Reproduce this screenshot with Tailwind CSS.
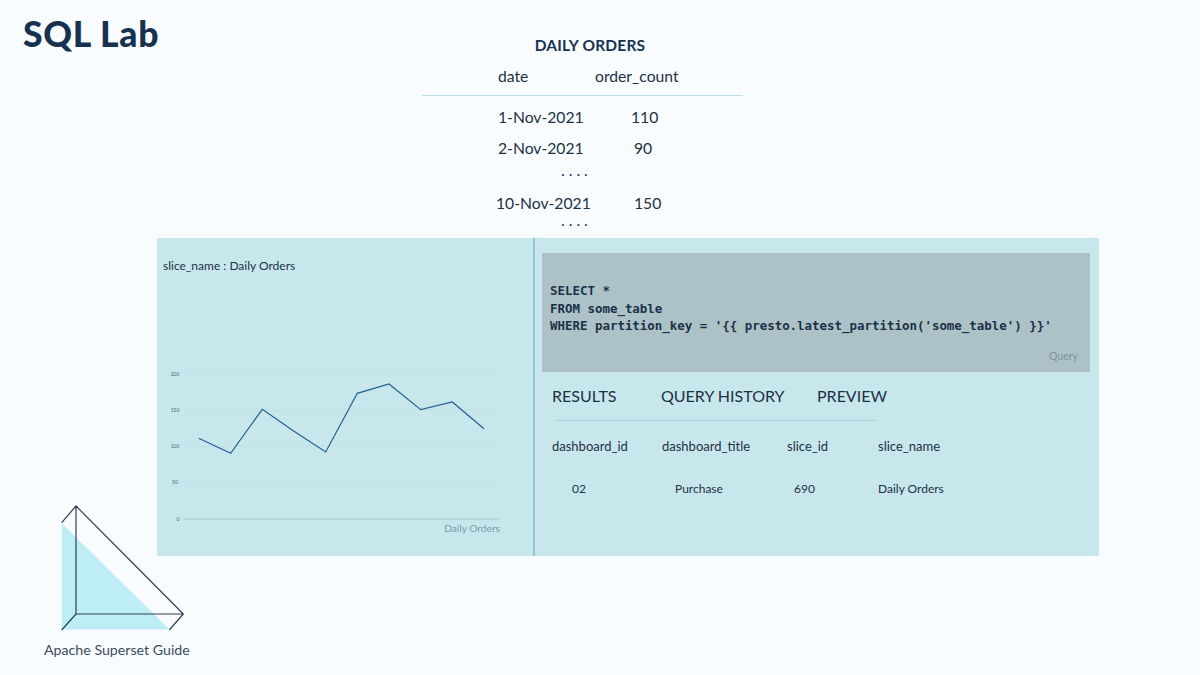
<!DOCTYPE html>
<html lang="en">
<head>
    <meta charset="UTF-8">
    <title>SQL Lab</title>
    <script src="https://cdn.jsdelivr.net/npm/@tailwindcss/browser@4"></script>
</head>
<body class="bg-[#f8fcff]">
<div class="relative w-[1200px] h-[675px] overflow-hidden font-['Lato',sans-serif] text-[#1d3044]">

    <!-- top: title + daily orders table -->
    <div class="flex h-[238px]">
        <div class="w-[422px] pl-[23px] pt-[12px]">
            <h1 class="text-[35.5px] leading-[44px] font-black text-[#16324f] tracking-[0.7px]">SQL Lab</h1>
        </div>
        <div class="w-[321px] text-[15.7px] leading-[22px]">
            <div class="pt-[34px] pl-[15px] text-center text-[15.5px] font-bold text-[#16324f] tracking-[0.2px]">DAILY ORDERS</div>
            <div class="flex pt-[9px] pb-[8px] pl-[76px] border-b border-[#b9e2e8]">
                <div class="w-[97px]">date</div>
                <div>order_count</div>
            </div>
            <div class="flex pt-[10px] pl-[76px]">
                <div class="w-[133px]">1-Nov-2021</div>
                <div>110</div>
            </div>
            <div class="flex pt-[9px] pl-[76px]">
                <div class="w-[136px]">2-Nov-2021</div>
                <div>90</div>
            </div>
            <div class="pl-[139px] h-[23px] leading-[14px] pt-[4px] tracking-[4px]">....</div>
            <div class="flex pt-[10px] pl-[74px]">
                <div class="w-[138px]">10-Nov-2021</div>
                <div>150</div>
            </div>
            <div class="pl-[139px] leading-[14px] -mt-[1px] tracking-[4px]">....</div>
        </div>
    </div>

    <!-- main panel -->
    <div class="flex ml-[157px] w-[942px] h-[318px] bg-[#c8e7ed]">
        <div class="w-[378px] shrink-0 border-r-2 border-[#8fc8cf] pl-[6px] pt-[20px]">
            <div class="text-[12px] leading-[16px]">slice_name : Daily Orders</div>
            <svg class="mt-[91px] -ml-[6px]" width="376" height="180" viewBox="157 365 376 180" fill="none">
                <g stroke-width="1">
                    <path d="M184 374H500M184 410H500M184 446H500M184 482H500" stroke="#c0e0e5"/>
                    <path d="M184 519H500" stroke="#a8cdd3"/>
                </g>
                <g font-family="Lato, sans-serif" font-size="5" fill="#4c6270" text-anchor="middle">
                    <text x="175" y="375.5">200</text>
                    <text x="175" y="411.5">150</text>
                    <text x="175" y="447.5">100</text>
                    <text x="175" y="484">50</text>
                    <text x="178" y="520.5">0</text>
                </g>
                <polyline points="198.7,438.3 230.7,453.3 262.3,409.3 294,431.3 325.7,452 357.3,393.3 389,384 420.7,409.7 452.3,402 484,428.7" stroke="#24608f" stroke-width="1.2"/>
                <text x="500" y="531.5" font-family="Lato, sans-serif" font-size="10.2" fill="#7b9aa6" text-anchor="end">Daily Orders</text>
            </svg>
        </div>

        <div class="flex-1 pt-[15px] pl-[7px] pr-[9px]">
            <div class="h-[119px] bg-[#adc2c6] pl-[8px] pr-[12px] pt-[29px]">
                <pre class="font-['DejaVu_Sans_Mono',monospace] font-bold text-[12.45px] leading-[17.5px] text-[#1b3049]">SELECT *
FROM some_table
WHERE partition_key = '{{ presto.latest_partition('some_table') }}'</pre>
                <div class="mt-[14px] text-right text-[10.5px] leading-[14px] text-[#7f959d]">Query</div>
            </div>

            <div class="flex pl-[10px] pt-[13px] text-[16px] leading-[22px] text-[#1d3044]">
                <div class="w-[109px]">RESULTS</div>
                <div class="w-[156px]">QUERY HISTORY</div>
                <div>PREVIEW</div>
            </div>
            <div class="ml-[14px] w-[320px] mt-[13px] border-t border-[#a6d2d9]"></div>

            <div class="flex pl-[10px] pt-[16px] text-[13px] leading-[18px]">
                <div class="w-[110px]">dashboard_id</div>
                <div class="w-[125px]">dashboard_title</div>
                <div class="w-[91px]">slice_id</div>
                <div>slice_name</div>
            </div>
            <div class="flex pl-[10px] pt-[25px] text-[12px] leading-[18px]">
                <div class="w-[110px] pl-[20px]">02</div>
                <div class="w-[125px] pl-[13px]">Purchase</div>
                <div class="w-[91px] pl-[7px]">690</div>
                <div>Daily Orders</div>
            </div>
        </div>
    </div>

    <!-- guide logo, sits over the panel corner -->
    <svg class="absolute left-0 top-[490px]" width="200" height="150" viewBox="0 490 200 150" fill="none">
        <polygon points="61.7,523 61.7,629.5 169.3,629.5" fill="#bdeef5"/>
        <path d="M61.7 522.7L76 506V614M76 506L183.3 614H76L61.7 630M183.3 614L169.3 630" stroke="#2f3f52" stroke-width="1.2" stroke-linejoin="round"/>
    </svg>

    <div class="pl-[44px] pt-[84px] text-[14.2px] leading-[20px] text-[#3d4b5c]">Apache Superset Guide</div>
</div>
</body>
</html>
